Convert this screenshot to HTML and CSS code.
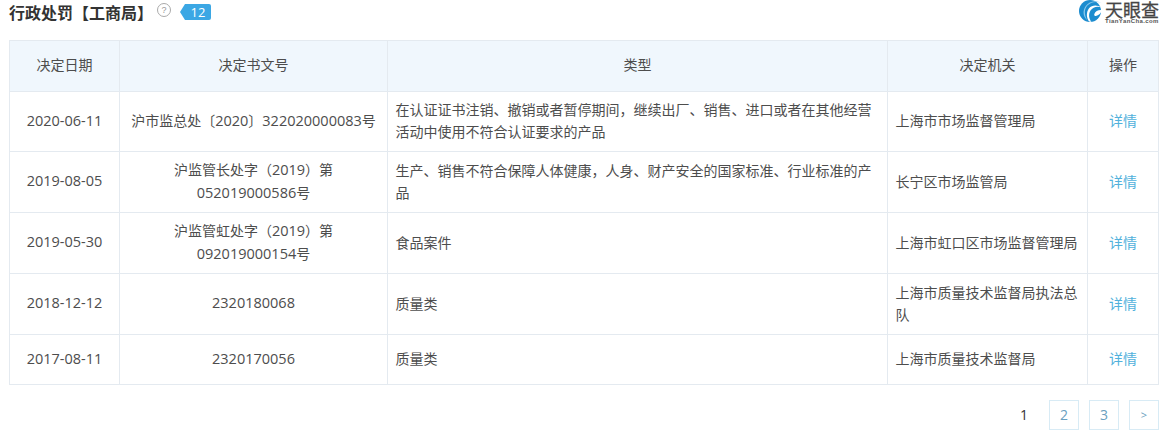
FILE: index.html
```html
<!DOCTYPE html>
<html lang="zh">
<head>
<meta charset="utf-8">
<title>行政处罚</title>
<link rel="stylesheet" href="styles.css">
</head>
<body>
<header class="head">
  <h2 class="title">行政处罚【工商局】</h2>
  <span class="help">?</span>
  <span class="badge">12</span>
  <div class="logo">
    <svg class="logo-mark" width="23" height="23" viewBox="0 0 24 24">
      <circle cx="11.500" cy="11.500" r="11.500" fill="#1c8ccf"/>
      <path d="M24 3.500C19 1 13 1.500 9 5.500C5.500 9 5 15 8.500 21C4.500 18 3.500 12 6.500 7C10 1.500 17 -1 24 3.500z" fill="#8cc9ec"/>
      <path d="M24 8C19 6 14.500 7.500 12 11C9.500 15 10.500 19.500 13 23L10.500 22.500C7.500 18 7.500 12.500 10.500 8.500C13.500 5 19 4.500 24 8z" fill="#fff"/>
      <path d="M24 10.500C20.500 10 17 11.500 16 14.500C15.500 16 16.500 17 18.500 16.500C20.500 16 23 14 24 10.500z" fill="#fff"/>
    </svg>
    <div class="logo-text">
      <span class="logo-cn">天眼查</span>
      <span class="logo-en">TianYanCha.com</span>
    </div>
  </div>
</header>
<table class="grid">
  <colgroup>
    <col class="c1"><col class="c2"><col class="c3"><col class="c4"><col class="c5">
  </colgroup>
  <thead>
    <tr><th>决定日期</th><th>决定书文号</th><th>类型</th><th>决定机关</th><th>操作</th></tr>
  </thead>
  <tbody>
    <tr class="r1">
      <td class="mid"><span class="num">2020-06-11</span></td>
      <td class="mid">沪市监总处〔<span class="num">2020</span>〕<span class="num">322020000083</span>号</td>
      <td>在认证证书注销、撤销或者暂停期间，继续出厂、销售、进口或者在其他经营活动中使用不符合认证要求的产品</td>
      <td>上海市市场监督管理局</td>
      <td class="mid"><a class="link">详情</a></td>
    </tr>
    <tr class="r2">
      <td class="mid"><span class="num">2019-08-05</span></td>
      <td class="mid">沪监管长处字（<span class="num">2019</span>）第<span class="num">052019000586</span>号</td>
      <td>生产、销售不符合保障人体健康，人身、财产安全的国家标准、行业标准的产品</td>
      <td>长宁区市场监管局</td>
      <td class="mid"><a class="link">详情</a></td>
    </tr>
    <tr class="r2">
      <td class="mid"><span class="num">2019-05-30</span></td>
      <td class="mid">沪监管虹处字（<span class="num">2019</span>）第<span class="num">092019000154</span>号</td>
      <td>食品案件</td>
      <td>上海市虹口区市场监督管理局</td>
      <td class="mid"><a class="link">详情</a></td>
    </tr>
    <tr class="r2">
      <td class="mid"><span class="num">2018-12-12</span></td>
      <td class="mid"><span class="num">2320180068</span></td>
      <td>质量类</td>
      <td>上海市质量技术监督局执法总队</td>
      <td class="mid"><a class="link">详情</a></td>
    </tr>
    <tr class="r3">
      <td class="mid"><span class="num">2017-08-11</span></td>
      <td class="mid"><span class="num">2320170056</span></td>
      <td>质量类</td>
      <td>上海市质量技术监督局</td>
      <td class="mid"><a class="link">详情</a></td>
    </tr>
  </tbody>
</table>
<nav class="pager">
  <span class="page current">1</span>
  <a class="page">2</a>
  <a class="page">3</a>
  <a class="page next">&gt;</a>
</nav>
</body>
</html>
```
FILE: styles.css
```css
* { box-sizing: border-box; }
html, body { margin: 0; padding: 0; }
body {
  width: 1163px;
  height: 437px;
  overflow: hidden;
  background: #fff;
  color: #333;
  font-family: "Noto Sans CJK SC", "Liberation Sans", sans-serif;
  font-size: 14px;
}
.head {
  height: 40px;
  padding: 0 4px 0 9px;
  display: flex;
  align-items: flex-start;
}
.title {
  margin: 0;
  font-size: 16px;
  line-height: 24px;
  font-weight: 700;
  color: #333;
  white-space: nowrap;
}
.help {
  width: 14px;
  height: 14px;
  margin: 3px 0 0 4px;
  border: 1px solid #aaa;
  border-radius: 50%;
  color: #999;
  font: 9px/12px "Liberation Sans", sans-serif;
  text-align: center;
}
.badge {
  position: relative;
  width: 26px;
  height: 16px;
  margin: 4px 0 0 14px;
  background: #3ba7e4;
  border-radius: 0 2px 2px 0;
  color: #fff;
  font: 13px/16px "Open Sans", sans-serif;
  text-align: center;
}
.badge::before {
  content: "";
  position: absolute;
  left: -5px;
  top: 0;
  border-style: solid;
  border-width: 8px 5px 8px 0;
  border-color: transparent #3ba7e4 transparent transparent;
}
.logo {
  margin-left: auto;
  display: flex;
  align-items: flex-start;
}
.logo-mark { display: block; }
.logo-text {
  display: flex;
  flex-direction: column;
  margin-left: 3px;
  width: 54px;
}
.logo-cn {
  font-size: 18px;
  line-height: 18px;
  height: 18px;
  color: #454545;
  -webkit-text-stroke: 0.3px #454545;
}
.logo-en {
  font: 700 6px/6px "Liberation Sans", sans-serif;
  letter-spacing: 0.4px;
  color: #555;
  white-space: nowrap;
}
.grid {
  table-layout: fixed;
  border-collapse: collapse;
  width: 1149px;
  margin-left: 9px;
}
.c1 { width: 110px; }
.c2 { width: 268px; }
.c3 { width: 500px; }
.c4 { width: 200px; }
.c5 { width: 71px; }
th, td {
  border: 1px solid #e4eaf0;
  padding: 0 7.500px 3px;
  font-size: 14px;
  line-height: 22px;
  font-weight: 400;
  color: #4d4d4d;
}
th {
  height: 51px;
  padding-bottom: 5px;
  background: #f0f7fd;
  text-align: center;
}
.r1 td { height: 60px; }
.r2 td { height: 61px; }
.r3 td { height: 50px; }
.mid { text-align: center; }
.num {
  font-family: "Open Sans", sans-serif;
  font-size: 14.500px;
}
.link { color: #51b1dc; }
.pager {
  display: flex;
  justify-content: flex-end;
  gap: 10px;
  margin: 15px 4px 0 0;
}
.page {
  width: 30px;
  height: 30px;
  border: 1px solid #d8ebf5;
  color: #6a9fc0;
  font: 14px/28px "Open Sans", sans-serif;
  text-align: center;
}
.current {
  border-color: transparent;
  color: #333;
}
.next { font-size: 11px; }
```
